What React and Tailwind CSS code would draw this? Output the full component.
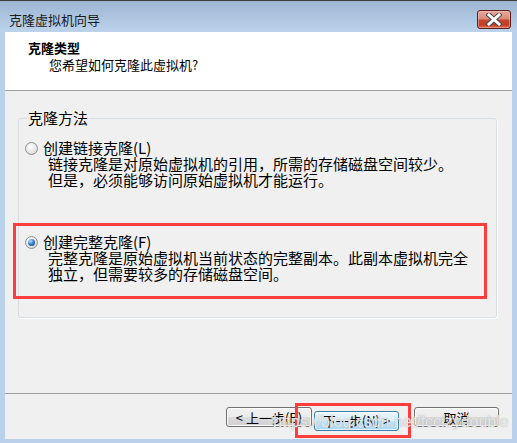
import React from "react";

function Radio({ checked }) {
    return (
        <span className="w-[13px] h-[13px] shrink-0 rounded-full border border-[#8e8f8f] bg-[radial-gradient(circle_at_40%_35%,#ffffff,#e6e6e6_55%,#c8c8c8)] flex items-center justify-center">
            {checked && (
                <span className="w-[7px] h-[7px] rounded-full bg-[radial-gradient(circle_at_35%_30%,#b9e0ff,#2a72c0_55%,#0c3c74)]" />
            )}
        </span>
    );
}

function WinButton({ children, primary, className = "" }) {
    return (
        <button
            className={
                primary
                    ? "h-[20px] rounded-[3px] border border-[#3c7fb1] bg-[linear-gradient(to_bottom,#eaf6fd_0%,#d9f0fc_50%,#bee6fd_51%,#a7d9f5_100%)] shadow-[inset_0_0_0_1px_#ffffffaa] text-[13px] leading-none text-black " + className
                    : "h-[20px] rounded-[3px] border border-[#707070] bg-[linear-gradient(to_bottom,#f2f2f2_0%,#ebebeb_50%,#dddddd_51%,#cfcfcf_100%)] shadow-[inset_0_0_0_1px_#fcfcfc] text-[13px] leading-none text-black " + className
            }
        >
            {children}
        </button>
    );
}

export default function App() {
    return (
        <div className="relative w-[517px] h-[443px] overflow-hidden bg-[#b9d1ea] border-t border-[#3c3c3c] flex flex-col font-['Noto_Sans_CJK_SC',sans-serif] text-black">

            {/* Title bar */}
            <div className="h-[31px] shrink-0 flex justify-between bg-[linear-gradient(to_bottom,#9cb5d3,#bcd3eb)]">
                <span className="pl-[9px] pt-[11px] text-[13px] leading-[16px] text-[#1b1b1b]">
                    克隆虚拟机向导
                </span>
                <button className="mt-[9px] mr-[6px] w-[34px] h-[19px] rounded-[3px] border border-[#5b1e1e] bg-[linear-gradient(to_bottom,#e6a797_0%,#d88a77_48%,#c4472f_52%,#c53e26_80%,#d9654b_100%)] shadow-[inset_0_0_0_1px_#f3c8bc80] flex items-center justify-center">
                    <svg width="16" height="13" viewBox="0 0 16 13">
                        <path d="M3 2 L13 11 M13 2 L3 11" stroke="#4a4a4a" strokeWidth="5" strokeLinecap="square" />
                        <path d="M3 2 L13 11 M13 2 L3 11" stroke="#ffffff" strokeWidth="3" strokeLinecap="square" />
                    </svg>
                </button>
            </div>

            {/* Window body */}
            <div className="flex-1 mx-[5px] mb-[4px] flex flex-col bg-[#f0f0f0]">

                {/* Header */}
                <div className="h-[59px] shrink-0 bg-white border-b border-[#a0a0a0] pl-[23px] pt-[8px] text-[13px] leading-[16px]">
                    <div className="font-bold">克隆类型</div>
                    <div className="mt-[1px] pl-[21px]">您希望如何克隆此虚拟机?</div>
                </div>

                {/* Group box */}
                <fieldset className="mt-[19px] ml-[13px] mr-[15px] border border-[#d5dfe5] rounded-[3px] shadow-[1px_1px_0_#ffffff] pt-[14px] pb-[35px] pl-[6px] text-[15px] leading-[16px]">
                    <legend className="ml-[2px] px-[1px]">克隆方法</legend>

                    <div>
                        <div className="flex items-center gap-[5px]">
                            <Radio />
                            <span>创建链接克隆(L)</span>
                        </div>
                        <div className="pl-[23px] whitespace-nowrap">
                            <div>链接克隆是对原始虚拟机的引用，所需的存储磁盘空间较少。</div>
                            <div>但是，必须能够访问原始虚拟机才能运行。</div>
                        </div>
                    </div>

                    <div className="relative mt-[46px]">
                        <div className="flex items-center gap-[5px]">
                            <Radio checked />
                            <span>创建完整克隆(F)</span>
                        </div>
                        <div className="pl-[23px] whitespace-nowrap">
                            <div>完整克隆是原始虚拟机当前状态的完整副本。此副本虚拟机完全</div>
                            <div>独立，但需要较多的存储磁盘空间。</div>
                        </div>
                        <div className="absolute left-[-12px] top-[-11px] w-[474px] h-[76px] border-[3px] border-[#ff3d3d] pointer-events-none" />
                    </div>
                </fieldset>

                <div className="flex-1" />

                {/* Buttons */}
                <div className="h-[46px] shrink-0 border-t border-[#a0a0a0] pt-[13px] pr-[13px] flex justify-end">
                    <WinButton className="w-[86px]">&lt; 上一步(B)</WinButton>
                    <div className="relative ml-[2px]">
                        <WinButton primary className="w-[85px]">下一步(N) &gt;</WinButton>
                        <div className="absolute left-[-19px] top-[-4px] w-[116px] h-[35px] border-[3px] border-[#ff3d3d] pointer-events-none" />
                    </div>
                    <WinButton className="w-[85px] ml-[15px]">取消</WinButton>
                </div>
            </div>

            {/* Watermark */}
            <span className="absolute left-[273px] top-[413px] font-['Liberation_Sans',Arial,sans-serif] text-[16px] leading-[16px] text-white/75 [text-shadow:0_0_1px_#9a9a9a] pointer-events-none">
                https://blog.csdn.net/fcclzydouble
            </span>
        </div>
    );
}
